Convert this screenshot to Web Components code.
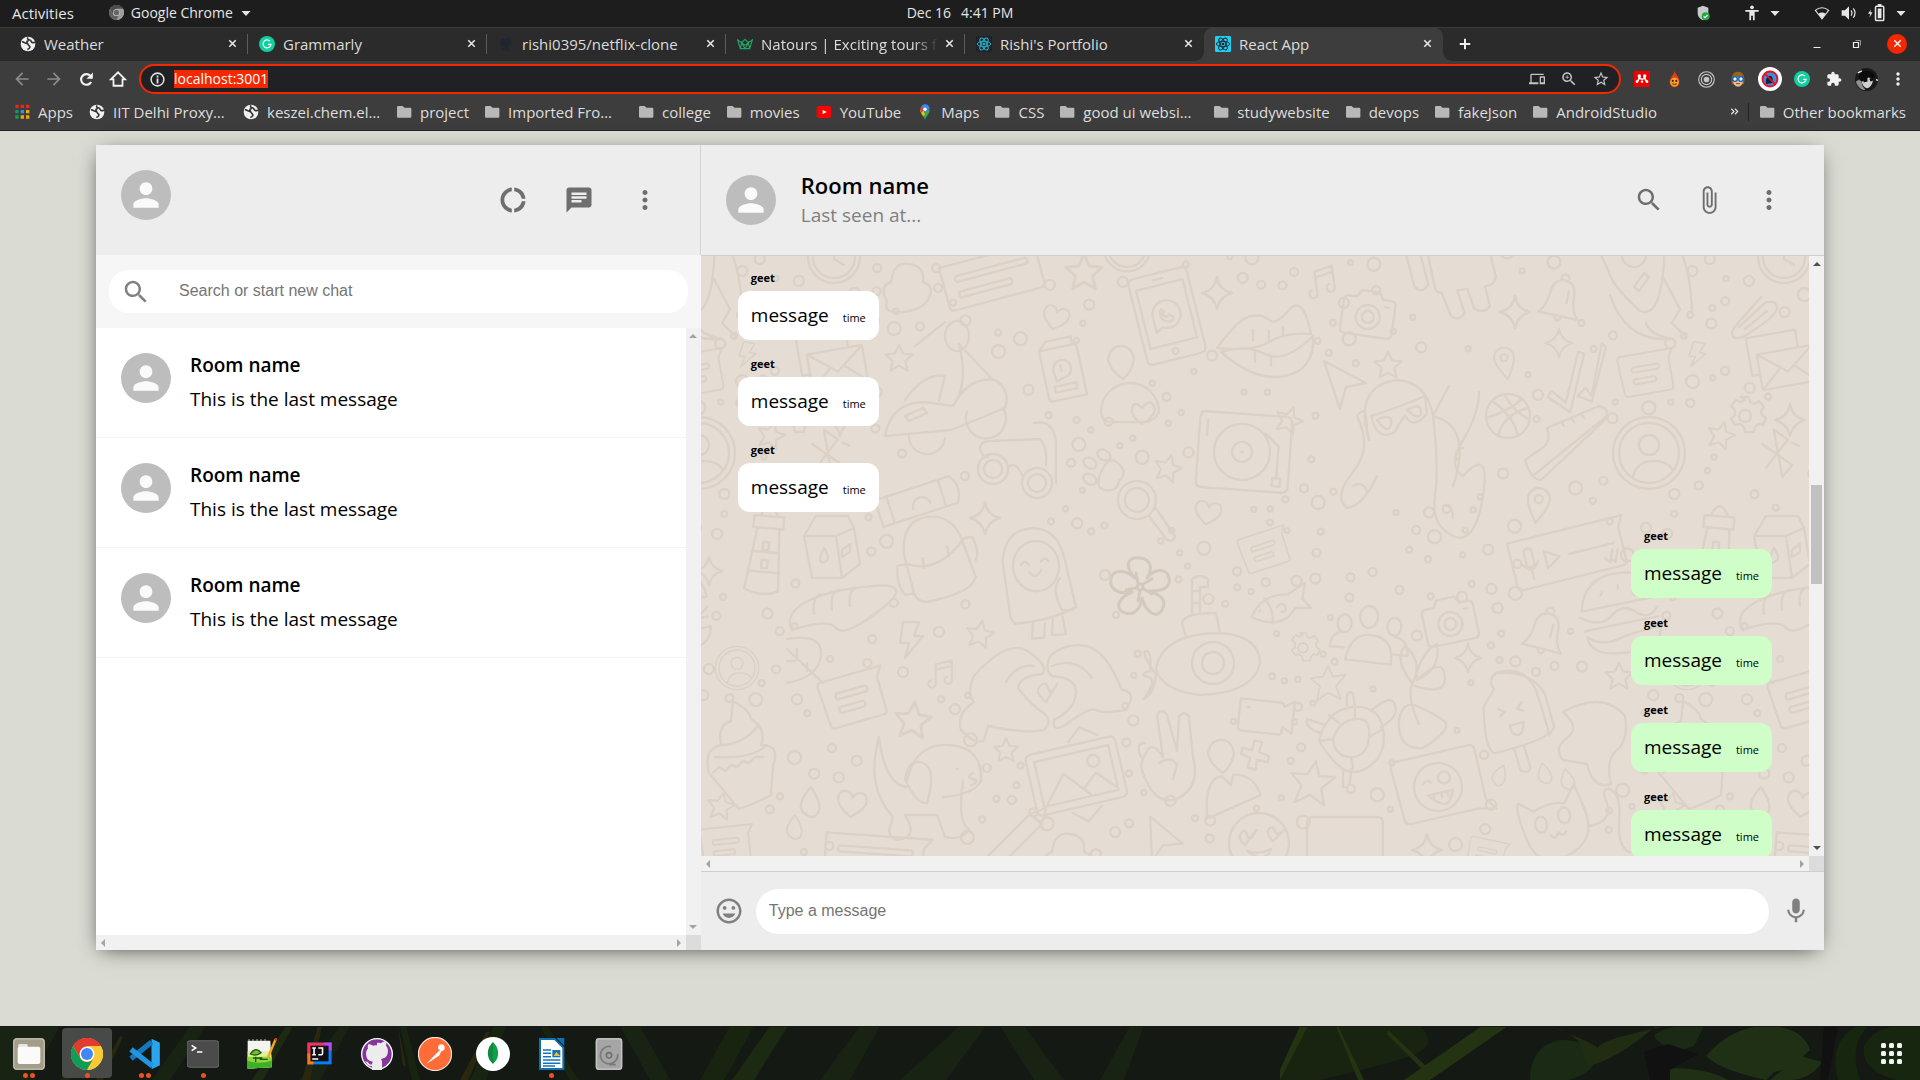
<!DOCTYPE html>
<html lang="en">
<head>
<meta charset="utf-8">
<title>React App</title>
<style>
html,body{margin:0;height:100%;background:#131710}
body{font-family:"Open Sans","Noto Sans",sans-serif;overflow:hidden}
</style>
</head>
<body>
<desktop-screen></desktop-screen>
<script>
const define = (name, html, setup) => {
  const tpl = document.createElement('template');
  tpl.innerHTML = html;
  customElements.define(name, class extends HTMLElement {
    connectedCallback() {
      if (this.shadowRoot) return;
      this.attachShadow({mode: 'open'}).append(tpl.content.cloneNode(true));
      if (setup) setup(this, this.shadowRoot);
    }
  });
};

/* ---------- icons ---------- */
const P = d => `<path fill="currentColor" d="${d}"/>`;
const ATOM = (bg, fg) => `<rect width="24" height="24" rx="2" fill="${bg}"/><g fill="none" stroke="${fg}" stroke-width="1.4"><ellipse cx="12" cy="12" rx="10" ry="4"/><ellipse cx="12" cy="12" rx="10" ry="4" transform="rotate(60 12 12)"/><ellipse cx="12" cy="12" rx="10" ry="4" transform="rotate(120 12 12)"/></g><circle cx="12" cy="12" r="2" fill="${fg}"/>`;
const MAG = 'M15.5 14h-.79l-.28-.27C15.41 12.59 16 11.11 16 9.5 16 5.91 13.09 3 9.5 3S3 5.91 3 9.5 5.91 16 9.5 16c1.61 0 3.09-.59 4.23-1.57l.27.28v.79l5 4.99L20.49 19l-4.99-5zm-6 0C7.01 14 5 11.99 5 9.5S7.01 5 9.5 5 14 7.01 14 9.5 11.99 14 9.5 14z';
const GRAM = '<circle cx="12" cy="12" r="12" fill="#12cf9f"/><path d="M16.5 7.8A6 6 0 1 0 18 12.6h-4.6M18 12.6l-1.6 3.6" fill="none" stroke="#fff" stroke-width="1.8"/>';
const OCTO = 'M12 2.5c1 0 2 .1 2.900.4 1.700-1.100 2.900-1.300 3.600-1.200.6 1.300.5 2.500.2 3.200 1 1 1.500 2.200 1.500 3.700 0 4.600-2.600 5.800-5.300 6.200.6.6.9 1.400.9 2.500V23H8.200v-3c-2.700.5-3.300-1-3.900-2-.4-.6-1-1-1.300-1.200 1.300-.6 2.300.3 3 1.300.6.9 1.500.8 2.200.5.1-.8.4-1.400.8-1.800-2.700-.4-5.200-1.600-5.200-6.200 0-1.500.5-2.700 1.500-3.700-.3-.7-.4-1.900.2-3.200.7-.1 1.900.1 3.600 1.200.9-.3 1.900-.4 2.900-.4z';
const ICONS = {
  donut: P('M11 5.08V2c-5 .5-9 4.81-9 10s4 9.500 9 10v-3.080c-3-.48-6-3.400-6-6.920s3-6.440 6-6.920zM18.970 11H22c-.47-5-4-8.530-9-9v3.080C16 5.510 18.540 8 18.970 11zM13 18.920V22c5-.47 8.530-4 9-9h-3.030c-.43 3-2.970 5.490-5.970 5.920z'),
  chat: P('M20 2H4c-1.100 0-1.990.9-1.990 2L2 22l4-4h14c1.100 0 2-.9 2-2V4c0-1.100-.9-2-2-2zM6 9h12v2H6V9zm8 5H6v-2h8v2zm4-6H6V6h12v2z'),
  more: P('M12 8c1.100 0 2-.9 2-2s-.9-2-2-2-2 .9-2 2 .9 2 2 2zm0 2c-1.100 0-2 .9-2 2s.9 2 2 2 2-.9 2-2-.9-2-2-2zm0 6c-1.100 0-2 .9-2 2s.9 2 2 2 2-.9 2-2-.9-2-2-2z'),
  person: P('M12 12c2.210 0 4-1.790 4-4s-1.790-4-4-4-4 1.790-4 4 1.790 4 4 4zm0 2c-2.670 0-8 1.340-8 4v2h16v-2c0-2.660-5.330-4-8-4z'),
  search: P(MAG),
  zoom: P(MAG + 'M12 10h-2v2H9v-2H7V9h2V7h1v2h2v1z'),
  clip: P('M16.500 6v11.500c0 2.210-1.790 4-4 4s-4-1.790-4-4V5c0-1.380 1.120-2.500 2.500-2.500s2.500 1.120 2.500 2.500v10.500c0 .55-.45 1-1 1s-1-.45-1-1V6H10v9.500c0 1.380 1.120 2.500 2.500 2.500s2.500-1.120 2.500-2.500V5c0-2.210-1.790-4-4-4S7 2.790 7 5v12.500c0 3.040 2.460 5.500 5.500 5.500s5.500-2.460 5.500-5.500V6h-1.500z'),
  smile: P('M11.990 2C6.470 2 2 6.480 2 12s4.470 10 9.990 10C17.520 22 22 17.520 22 12S17.520 2 11.990 2zM12 20c-4.420 0-8-3.580-8-8s3.580-8 8-8 8 3.580 8 8-3.580 8-8 8zm3.500-9c.83 0 1.500-.67 1.500-1.500S16.330 8 15.500 8 14 8.670 14 9.500s.67 1.500 1.500 1.500zm-7 0c.83 0 1.500-.67 1.500-1.500S9.330 8 8.500 8 7 8.670 7 9.500 7.670 11 8.500 11zm3.500 6.500c2.330 0 4.310-1.460 5.110-3.500H6.890c.8 2.040 2.780 3.500 5.110 3.500z'),
  mic: P('M12 14c1.660 0 2.990-1.340 2.990-3L15 5c0-1.660-1.340-3-3-3S9 3.340 9 5v6c0 1.660 1.340 3 3 3zm5.300-3c0 3-2.540 5.100-5.300 5.100S6.700 14 6.700 11H5c0 3.410 2.720 6.230 6 6.720V21h2v-3.280c3.280-.48 6-3.300 6-6.720h-1.700z'),
  back: P('M20 11H7.830l5.590-5.590L12 4l-8 8 8 8 1.410-1.410L7.830 13H20v-2z'),
  forward: P('M12 4l-1.410 1.410L16.170 11H4v2h12.170l-5.580 5.590L12 20l8-8z'),
  reload: '<path d="M18.500 15.500A7.500 7.500 0 1 1 17.300 6.700" fill="none" stroke="currentColor" stroke-width="3"/><path fill="currentColor" d="M21 2v9h-9z"/>',
  home: '<path d="M2.500 12.500L12 3l9.500 9.500H18V21H6v-8.500z" fill="none" stroke="currentColor" stroke-width="2.400"/>',
  info: '<circle cx="12" cy="12" r="9" fill="none" stroke="currentColor" stroke-width="2.200"/>' + P('M10.700 6.500h2.600V9h-2.600zM10.700 10.500h2.600v7h-2.600z'),
  cast: P('M4 6h18V4H4c-1.100 0-2 .9-2 2v11H0v3h14v-3H4V6zm19 2h-6c-.55 0-1 .45-1 1v10c0 .55.45 1 1 1h6c.55 0 1-.45 1-1V9c0-.55-.45-1-1-1zm-1 9h-4v-7h4v7z'),
  star: P('M22 9.240l-7.190-.62L12 2 9.190 8.630 2 9.240l5.460 4.730L5.820 21 12 17.270 18.180 21l-1.630-7.030L22 9.240zM12 15.400l-3.760 2.270 1-4.280-3.320-2.880 4.380-.38L12 6.100l1.710 4.040 4.380.38-3.320 2.880 1 4.280L12 15.400z'),
  puzzle: P('M20.500 11H19V7c0-1.100-.9-2-2-2h-4V3.500C13 2.120 11.880 1 10.500 1S8 2.120 8 3.500V5H4c-1.100 0-1.990.9-1.990 2v3.800H3.500c1.490 0 2.700 1.210 2.700 2.700s-1.210 2.700-2.700 2.700H2V20c0 1.100.9 2 2 2h3.800v-1.500c0-1.490 1.210-2.700 2.700-2.700 1.490 0 2.700 1.210 2.700 2.700V22H17c1.100 0 2-.9 2-2v-4h1.500c1.380 0 2.500-1.120 2.500-2.500S21.880 11 20.500 11z'),
  close: '<path d="M5 5l14 14M19 5L5 19" stroke="currentColor" stroke-width="3.400"/>',
  plus: '<path d="M12 3v18M3 12h18" stroke="currentColor" stroke-width="3.400"/>',
  min: '<path d="M5 19h14" stroke="currentColor" stroke-width="2"/>',
  restore: '<path d="M5 9h10v10H5z" fill="none" stroke="currentColor" stroke-width="2.400"/><path d="M9 5h10v10" fill="none" stroke="currentColor" stroke-width="1.500" opacity=".7"/>',
  tri: P('M3 8h18l-9 10z'),
  chevrons: '<path d="M5 6l6 6-6 6M13 6l6 6-6 6" fill="none" stroke="currentColor" stroke-width="2.600"/>',
  folder: P('M0 5q0-2 2-2h7l3 3h9q2 0 2 2v12q0 2-2 2H2q-2 0-2-2z'),
  globe: '<circle cx="12" cy="12" r="11" fill="#f1f1f1"/><path d="M3 9c3-1 4 2 7 2s2 3 4 4 0 5-3 5M12 2c-2 3 1 4 3 4s1 4 4 4 3-1 4 0M13 7c-3 0-4 3-1 4" fill="none" stroke="#333" stroke-width="2.400"/>',
  grammarly: GRAM,
  octo: `<g fill="#1f2630"><path d="${OCTO}"/></g>`,
  natours: '<path d="M1 6l6 4 5-5 5 5 6-4-4 13H5zM5 19l2-9 5 9 5-9 2 9M7 10l5 4 5-4" fill="none" stroke="#21a366" stroke-width="1.700"/>',
  atomdark: ATOM('#20232a', '#2fb5cf'),
  atomcyan: ATOM('#1fd0f5', '#20232a'),
  apps: '<g><path fill="#e8291c" d="M2 1h5v5H2zM10 1h5v5h-5zM18 1h5v5h-5z"/><path fill="#0c9d58" d="M2 9h5v5H2zM2 17h5v5H2z"/><path fill="#4285f4" d="M10 9h5v5h-5z"/><path fill="#f4a70b" d="M18 9h5v5h-5zM10 17h5v5h-5zM18 17h5v5h-5z"/></g>',
  youtube: '<rect x="1" y="3" width="22" height="18" rx="4" fill="#f00"/><path fill="#fff" d="M10 8.500l6 3.500-6 3.500z"/>',
  maps: '<path fill="#34a853" d="M12 24c-1-5-7-9-7-15h14c0 6-6 10-7 15z"/><path fill="#fbbc04" d="M5 9l4-2 3 9-3 2C7 15 5 12 5 9z"/><path fill="#ea4335" d="M5 9c0-3 1-5 2-6l5 4-5 6C6 12 5 10 5 9z"/><path fill="#4285f4" d="M7 3c3-4 11-4 12 4l-7 6z"/><circle cx="12" cy="8" r="2.600" fill="#fff"/>',
  shield: '<path fill="#c9c9c9" d="M12 1l8 3v8c0 6-4 9-8 11-4-2-8-5-8-11V4z"/><circle cx="16" cy="17" r="6" fill="#27a844"/><path d="M13 17l2 2 4-4" fill="none" stroke="#fff" stroke-width="1.600"/>',
  access: '<circle cx="12" cy="3.500" r="2.800" fill="currentColor"/>' + P('M2 7.500h20v2.500h-6v13h-2.600v-7h-2.800v7H8V10H2z'),
  wifi: '<path d="M2 8c6-5 14-5 20 0L12 21z" fill="none" stroke="currentColor" stroke-width="1.600"/>' + P('M6.500 13c3.500-2.500 7.500-2.500 11 0L12 21z'),
  volume: P('M1 8h5l6-6v20l-6-6H1z') + '<path d="M15 8q3 4 0 8M18.500 5q5 7 0 14" fill="none" stroke="currentColor" stroke-width="1.800"/>',
  battery: P('M4 7L0 13h3l-1 5 4-7H3z') + '<rect x="10" y="3" width="11" height="19" rx="1.500" fill="none" stroke="currentColor" stroke-width="2"/>' + P('M13 6h5v13h-5zM13 0h5v3h-5z'),
  mendeley: '<path fill="#f00000" d="M0 0h24v24H0z"/><circle cx="8" cy="7.500" r="2.600" fill="#fff"/><circle cx="16" cy="7.500" r="2.600" fill="#fff"/><circle cx="4.500" cy="16" r="2" fill="#fff"/><circle cx="12" cy="16" r="1.800" fill="#fff"/><circle cx="19.500" cy="16" r="2" fill="#fff"/><path d="M4.500 16q3-2 3.500-8 1 4 4 5 3-1 4-5 .5 6 3.500 8" fill="none" stroke="#fff" stroke-width="2.200"/>',
  flame: '<path fill="#e8391d" d="M12 0c1 4 7 8 7 15a7 8 0 0 1-14 0c0-5 6-9 7-15z"/><path fill="#f5a623" d="M12 9c4 0 6 4 6 7s-3 6-6 6-6-3-6-6 2-7 6-7z"/><circle cx="9.500" cy="14" r="1.500" fill="#40210d"/><circle cx="14.500" cy="14" r="1.500" fill="#40210d"/><path d="M9 18q3 2 6 0" fill="none" stroke="#40210d" stroke-width="1.400"/>',
  target: '<g fill="none" stroke="#c4c4c4" stroke-width="1.600"><circle cx="12" cy="12" r="11"/><circle cx="12" cy="12" r="7.300"/></g><circle cx="12" cy="12" r="4" fill="#c4c4c4"/>',
  girl: '<path fill="#9a6418" d="M3 20C1 8 4 1 12 1s11 7 9 19z"/><ellipse cx="12" cy="15" rx="7.500" ry="8.500" fill="#f2b98a"/><path fill="#9a6418" d="M4 9c2-6 14-6 16 0-6 1-10-1-16 0z"/><circle cx="7.500" cy="12" r="3.500" fill="#e8f4ff" stroke="#0b62c4" stroke-width="2"/><circle cx="16.500" cy="12" r="3.500" fill="#e8f4ff" stroke="#0b62c4" stroke-width="2"/><path d="M9 19h6" stroke="#b23b2a" stroke-width="1.500"/>',
  blocked: '<circle cx="12" cy="12" r="12" fill="#fff"/><circle cx="12" cy="12" r="7.500" fill="#3f8fd8"/><path d="M8 17q-1-6 3-8t4 7z" fill="#124"/><circle cx="12" cy="12" r="7.500" fill="none" stroke="#e8101a" stroke-width="1.800"/><path d="M6.700 6.700l10.600 10.600" stroke="#e8101a" stroke-width="1.800"/>',
  face: '<circle cx="12" cy="12" r="12" fill="#1a1a1a"/><path fill="#cfcfcf" d="M7 9c3-2 8-3 12 0 0 5-1 10-6 12-4 0-7-6-6-12z"/><path fill="#8f8f8f" d="M1 14l5-3 2 8 3 4C6 23 2 19 1 14z"/><path fill="#0b0b0b" d="M4 9C6 1 17 1 21 8l-2 3-5-1-6 4-3-1zM9 12l4-1v3l-4 1zM15 11l4-1v3l-3 1z"/><path d="M3 5l4-2M22 12l2 1" stroke="#eee" stroke-width="1.500"/>',
  grid: '<g fill="#f4f4f4">' + [2, 10, 18].map(y => [2, 10, 18].map(x => `<rect x="${x}" y="${y}" width="5" height="5" rx="1.500"/>`).join('')).join('') + '</g>',
  /* dock launchers */
  files: '<rect width="24" height="24" rx="3" fill="#a39d8c"/><rect x=".6" y=".6" width="22.800" height="22.800" rx="2.600" fill="none" stroke="#c2bcab" stroke-width="1"/><path fill="#e9e6df" d="M4 5.500q0-1 1-1h5q1 0 1 1V9H4z"/><rect x="3.500" y="6.500" width="17" height="13" rx="1.500" fill="#fafaf8"/>',
  chrome: '<circle cx="12" cy="12" r="12" fill="#fbc934"/><path fill="#e33b2e" d="M1.600 6A12 12 0 0 1 22.400 6H12a6 6 0 0 0-5.200 3z"/><path fill="#e33b2e" d="M1.600 6L6.800 15 12 6h10.400A12 12 0 0 0 1.600 6z"/><path fill="#0f9d58" d="M1.600 6A12 12 0 0 0 12 24l5.200-9a6 6 0 0 1-10.400 0z"/><path fill="#fbc934" d="M22.400 6A12 12 0 0 1 12 24l5.200-9A6 6 0 0 0 12 6z"/><circle cx="12" cy="12" r="5.600" fill="#fff"/><circle cx="12" cy="12" r="4.500" fill="#4285f4"/>',
  vscode: '<path fill="#1f86c9" d="M17 .8L23 3.500v17L17 23.200z"/><path fill="#2aa5ef" d="M17 .8L23 3.500v17L17 23.200V7z"/><path d="M1.500 15.500L17 3" stroke="#1577bd" stroke-width="4"/><path d="M1.500 8.500L17.500 21" stroke="#2196de" stroke-width="4"/>',
  terminal: '<rect y="2" width="24" height="20" rx="2.500" fill="#4b4b4b" stroke="#676767" stroke-width=".8"/><path d="M3.500 5.500l3 2-3 2M7.500 10.500h4" fill="none" stroke="#fff" stroke-width="1.200"/>',
  notepad: '<path fill="#f4f4ee" d="M2 2h17l1 20-18 1z"/><path fill="#dff0a0" d="M2 10h17.500l.5 6-18 1z"/><path fill="#8fd63a" d="M2 14h18v8L2 23z"/><path fill="#3fae2a" d="M2 17q9 3 18 0v5L2 23z"/><path d="M3 2v-1M6 2v-1M9 2v-1M12 2v-1M15 2v-1" stroke="#bbb" stroke-width="1"/><path d="M4 12q4-6 8-1-4 3-8 1zM6 15h7M8 14v4M11 16h6" fill="#6cbf2f" stroke="#20540f" stroke-width="1"/><path d="M23 1l-6 14" stroke="#f6a81c" stroke-width="1.800"/><path d="M23.600 0l-.8 2" stroke="#d33" stroke-width="1.800"/>',
  idea: '<path fill="#087cfa" d="M2 3h20v18H2z"/><path fill="#fe315d" d="M2 3h20l-9 9-11 3z"/><path fill="#b74af7" d="M16 3h6v7l-6-2z"/><path fill="#f97a12" d="M2 12h5v9H2z"/><path fill="#111" d="M4.500 5.500h15v13h-15z"/><path d="M6 16.500h5M6 7.500h3M6 13h3M7.500 7.500V13M11 7.500h3.500V12q0 1-1 1H11" fill="none" stroke="#fff" stroke-width="1.300"/>',
  github: `<circle cx="12" cy="12" r="11.500" fill="#87359b" stroke="#fff" stroke-width="1"/><g transform="translate(0 1)" fill="#ececec"><path d="${OCTO}"/></g>`,
  postman: '<circle cx="12" cy="12" r="11.700" fill="#ff6c37" stroke="#ffe9dc" stroke-width=".8"/><path d="M6 19l8-9 3-1-2 4z" fill="#fff"/><circle cx="16.500" cy="7.500" r="2.300" fill="#fff"/><path d="M8 16l7-7" stroke="#ff6c37" stroke-width=".8"/>',
  mongo: '<circle cx="12" cy="12" r="12" fill="#fff"/><path fill="#0ea04a" d="M12 3.500c3 3 4 6 3.500 9.500-.4 3-2 4.500-3.500 6z"/><path fill="#13883f" d="M12 3.500c-3 3-4 6-3.500 9.500.4 3 2 4.500 3.500 6z"/>',
  writer: '<path fill="#0f6fb0" d="M3 0h12l7 7v17H3z"/><path fill="#0f6fb0" d="M16 0h6v6z"/><path fill="#fff" d="M4.500 1.500h10l6 6v15h-16z"/><path d="M6 9h6M6 11.500h6M6 14h6M6 16.500h13M6 19h13M6 21h9" stroke="#1773b5" stroke-width="1.100"/><path fill="#1773b5" d="M13 9h6v5.500h-6z"/><path fill="#f2c037" d="M14 13.500l2-3 3 3z"/>',
  disk: '<rect x="2" width="20" height="24" rx="2.500" fill="#a5a5a5"/><rect x="2.600" y=".6" width="18.800" height="22.800" rx="2" fill="none" stroke="#c6c6c6"/><path d="M18.500 12a6.500 6.500 0 1 1-5-5.500M12 20h5" fill="none" stroke="#7a7a7a" stroke-width="1.200"/><circle cx="12" cy="13" r="2" fill="none" stroke="#707070" stroke-width="1.200"/>'
};
define('ui-icon', `<style>:host{display:block;flex:none}svg{display:block}</style>`, (host, root) => {
  const size = host.getAttribute('size') || 24;
  root.innerHTML += `<svg width="${size}" height="${size}" viewBox="0 0 24 24" aria-hidden="true">${ICONS[host.getAttribute('name')]}</svg>`;
});

define('icon-button', `<style>
:host{display:block;flex:none}
button{all:unset;display:flex;align-items:center;justify-content:center;box-sizing:border-box;width:var(--w,32px);height:var(--h,32px);border-radius:50%;cursor:pointer}
</style><button type="button"><ui-icon></ui-icon></button>`, (host, root) => {
  const icon = root.querySelector('ui-icon');
  const fresh = document.createElement('ui-icon');
  fresh.setAttribute('name', host.getAttribute('icon'));
  fresh.setAttribute('size', host.getAttribute('size') || 18);
  icon.replaceWith(fresh);
  root.querySelector('button').setAttribute('aria-label', host.getAttribute('label'));
});

/* ---------- system bar ---------- */
define('system-bar', `<style>
:host{display:grid;grid-template-columns:1fr auto 1fr;align-items:center;height:27px;background:#1d1d1d;color:#e6e6e6;font-size:15px;line-height:24px}
.l,.c,.r{display:flex;align-items:center;padding-bottom:2px}
.l{padding-left:12px}.app{display:flex;align-items:center;gap:7px;margin-left:35px;font-size:14px}
.c{gap:10px;font-size:14px}.r{justify-content:flex-end;padding-right:13px;gap:11px}
.ball{filter:grayscale(1);opacity:.75}
.g{margin-left:22px}
.t{margin-left:-2px}
</style>
<div class="l"><span>Activities</span><span class="app"><ui-icon class="ball" name="chrome" size="15"></ui-icon><span>Google Chrome</span><ui-icon name="tri" size="12"></ui-icon></span></div>
<div class="c"><span>Dec 16</span><span>4:41 PM</span></div>
<div class="r"><ui-icon name="shield" size="16"></ui-icon><ui-icon class="g" name="access" size="16"></ui-icon><ui-icon class="t" name="tri" size="12"></ui-icon><ui-icon class="g" name="wifi" size="16"></ui-icon><ui-icon name="volume" size="16"></ui-icon><ui-icon name="battery" size="18"></ui-icon><ui-icon class="t" name="tri" size="12"></ui-icon></div>`);

/* ---------- browser chrome ---------- */
define('browser-tab', `<style>
:host{display:flex;align-items:center;box-sizing:border-box;width:239px;height:33px;padding:0 10px 2px 11px;position:relative;color:#dcdcdc}
.title{all:unset;flex:1;min-width:0;overflow:hidden;white-space:nowrap;margin:0 5px 0 8px;font-size:15px;line-height:24px}
:host([fade]) .title{-webkit-mask:linear-gradient(90deg,#000 86%,transparent)}
:host(:not([active]):not([last]))::after{content:"";position:absolute;right:0;top:6px;width:1px;height:20px;background:#5c5c5c}
:host([active]){background:#3d3d3d;border-radius:8px 8px 0 0}
:host([active])::before,:host([active])::after{content:"";position:absolute;bottom:0;width:8px;height:8px}
:host([active])::before{left:-8px;background:radial-gradient(circle at 0 0,transparent 7px,#3d3d3d 8px)}
:host([active])::after{right:-8px;background:radial-gradient(circle at 100% 0,transparent 7px,#3d3d3d 8px)}
icon-button{--w:12px;--h:16px;color:#e8e8e8}
</style><slot name="icon"></slot><button class="title" type="button"><slot></slot></button><icon-button icon="close" size="11" label="Close tab"></icon-button>`);

define('tab-strip', `<style>
:host{display:flex;align-items:center;height:33px;border-top:1px solid #3c3c3c;background:#2b2b2b;padding:0 13px 0 9px}
.win{display:flex;align-items:center;margin-left:auto;gap:8px;color:#f0f0f0;padding-bottom:2px}
.new{margin-left:6px;color:#f0f0f0;padding-bottom:2px}
.x{--w:20px;--h:20px;background:#f42800;border-radius:50%;margin-left:6px}
</style>
<browser-tab><ui-icon slot="icon" name="globe" size="16"></ui-icon>Weather</browser-tab>
<browser-tab><ui-icon slot="icon" name="grammarly" size="16"></ui-icon>Grammarly</browser-tab>
<browser-tab><ui-icon slot="icon" name="octo" size="16"></ui-icon>rishi0395/netflix-clone</browser-tab>
<browser-tab fade><ui-icon slot="icon" name="natours" size="16"></ui-icon>Natours | Exciting tours for</browser-tab>
<browser-tab last><ui-icon slot="icon" name="atomdark" size="16"></ui-icon>Rishi's Portfolio</browser-tab>
<browser-tab active><ui-icon slot="icon" name="atomcyan" size="16"></ui-icon>React App</browser-tab>
<icon-button class="new" icon="plus" size="14" label="New tab"></icon-button>
<div class="win"><icon-button icon="min" size="12" label="Minimise"></icon-button><icon-button icon="restore" size="12" label="Restore"></icon-button><icon-button class="x" icon="close" size="11" label="Close"></icon-button></div>`);

define('address-bar', `<style>
:host{display:flex;align-items:center;box-sizing:border-box;flex:1;height:30px;margin:0 5px;padding:0 2px 0 8px;border:2px solid #f42800;border-radius:15px;background:#202124;color:#e0e0e0}
label{display:flex;align-items:center;flex:1;gap:8px}
input{all:unset;field-sizing:content;background:#f42800;color:#fff;font-size:14px;line-height:18px;height:18px}
icon-button{--h:24px;color:#c4c4c4}
</style><label><ui-icon name="info" size="17"></ui-icon><input value="localhost:3001" aria-label="Address"></label>
<icon-button icon="cast" size="16" label="Send to device"></icon-button><icon-button icon="zoom" size="18" label="Zoom"></icon-button><icon-button icon="star" size="18" label="Bookmark this page"></icon-button>`);

define('tool-row', `<style>
:host{display:flex;align-items:center;height:36px;padding:0 6px;background:#3d3d3d;color:#f2f2f2}
.off{color:#8b8b8b}
</style>
<icon-button class="off" icon="back" size="20" label="Back"></icon-button><icon-button class="off" icon="forward" size="20" label="Forward"></icon-button><icon-button icon="reload" size="17" label="Reload"></icon-button><icon-button icon="home" size="18" label="Home"></icon-button>
<address-bar></address-bar>
<icon-button icon="mendeley" size="16" label="Mendeley"></icon-button><icon-button icon="flame" size="17" label="Flame"></icon-button><icon-button icon="target" size="17" label="Target"></icon-button><icon-button icon="girl" size="16" label="Girl"></icon-button><icon-button icon="blocked" size="24" label="Blocker"></icon-button><icon-button icon="grammarly" size="16" label="Grammarly"></icon-button><icon-button icon="puzzle" size="16" label="Extensions"></icon-button><icon-button icon="face" size="23" label="Profile"></icon-button><icon-button icon="more" size="20" label="Menu"></icon-button>`);

define('bookmark-link', `<style>
:host{display:block;flex:none;box-sizing:border-box;padding-right:16px}
:host([long]){width:154px}
a{display:flex;align-items:center;gap:8px;color:#dedede;text-decoration:none;font-size:15px;line-height:22px;white-space:nowrap}
ui-icon{color:#b8b8b8}
</style><a href="#"><ui-icon></ui-icon><span><slot></slot></span></a>`, (host, root) => {
  const fresh = document.createElement('ui-icon');
  fresh.setAttribute('name', host.getAttribute('icon') || 'folder');
  fresh.setAttribute('size', host.hasAttribute('icon') ? 16 : 15);
  root.querySelector('ui-icon').replaceWith(fresh);
});
define('bookmark-row', `<style>
:host{display:flex;align-items:center;height:29px;padding:0 0 4px 14px;background:#3d3d3d;border-bottom:1px solid #242424;color:#e4e4e4}
.rest{display:flex;align-items:center;margin-left:auto}
.rest i{width:1px;height:18px;background:#222;margin:0 11px 0 8px}
.rest bookmark-link{padding-right:14px}
</style>
<bookmark-link icon="apps">Apps</bookmark-link><bookmark-link long icon="globe">IIT Delhi Proxy…</bookmark-link><bookmark-link long icon="globe">keszei.chem.el…</bookmark-link><bookmark-link>project</bookmark-link><bookmark-link long>Imported Fro…</bookmark-link><bookmark-link>college</bookmark-link><bookmark-link>movies</bookmark-link><bookmark-link icon="youtube">YouTube</bookmark-link><bookmark-link icon="maps">Maps</bookmark-link><bookmark-link>CSS</bookmark-link><bookmark-link long>good ui websi…</bookmark-link><bookmark-link>studywebsite</bookmark-link><bookmark-link>devops</bookmark-link><bookmark-link>fakeJson</bookmark-link><bookmark-link>AndroidStudio</bookmark-link>
<div class="rest"><ui-icon name="chevrons" size="11"></ui-icon><i></i><bookmark-link>Other bookmarks</bookmark-link></div>`);

/* ---------- chat pieces ---------- */
define('user-avatar', `<style>
:host{display:flex;flex:none;align-items:center;justify-content:center;width:50px;height:50px;border-radius:50%;background:#bdbdbd;color:#fafafa}
</style><ui-icon name="person" size="38"></ui-icon>`);

define('scroll-track', `<style>
:host{display:flex;justify-content:space-between;align-items:center;background:#f1f1f1;color:#a3a3a3}
:host([axis=y]){flex-direction:column;width:15px}
:host([axis=x]){height:15px}
:host([strong]){color:#505050}
i{width:0;height:0;border:4px solid transparent}
:host([axis=y]) .a{border-top:0;border-bottom-color:currentColor;margin-top:6px}
:host([axis=y]) .b{border-bottom:0;border-top-color:currentColor;margin-bottom:6px}
:host([axis=x]) .a{border-left:0;border-right-color:currentColor;margin-left:5px}
:host([axis=x]) .b{border-right:0;border-left-color:currentColor;margin-right:5px}
.thumb{display:none;width:11px;height:99px;background:#c1c1c1;margin-bottom:43px}
:host([strong]) .thumb{display:block}
</style><i class="a"></i><span class="thumb"></span><i class="b"></i>`);

define('room-row', `<style>
:host{display:flex;box-sizing:border-box;height:110px;padding:25px 25px 0;border-bottom:1px solid #f4f4f4;gap:19px}
h2{margin:0 0 10px;font-size:19px;line-height:24px;font-weight:600}
p{margin:0;font-size:19px;line-height:24px}
</style><user-avatar></user-avatar><div><h2><slot></slot></h2><p><slot name="last"></slot></p></div>`);

define('room-sidebar', `<style>
:host{display:flex;flex-direction:column;flex:35;min-width:0;background:#fff}
header{display:flex;box-sizing:border-box;height:110px;padding:25px 28px 25px 25px;background:#ededed;border-right:1px solid #d3d3d3}
nav{display:flex;align-self:center;margin-left:auto;gap:12px;color:#6e6e6e;--w:54px;--h:54px}
.find{background:#f6f6f6;padding:15px 13px}
label{display:flex;align-items:center;height:43px;border-radius:20px;background:#fff;padding:0 12px;gap:28px;color:#808080}
input{all:unset;flex:1;font-family:"Liberation Sans",Arial,sans-serif;font-size:16px;line-height:20px;padding-bottom:2px;color:#222}
input::placeholder{color:#757575;opacity:1}
.list{flex:1;display:grid;grid-template:1fr 15px / 1fr 15px;min-height:0}
.corner{background:#dcdcdc}
</style>
<header><user-avatar></user-avatar><nav><icon-button icon="donut" size="30" label="Status"></icon-button><icon-button icon="chat" size="30" label="New chat"></icon-button><icon-button icon="more" size="30" label="Menu"></icon-button></nav></header>
<div class="find"><label><ui-icon name="search" size="30"></ui-icon><input placeholder="Search or start new chat" aria-label="Search or start new chat"></label></div>
<div class="list"><div>
<room-row>Room name<span slot="last">This is the last message</span></room-row>
<room-row>Room name<span slot="last">This is the last message</span></room-row>
<room-row>Room name<span slot="last">This is the last message</span></room-row>
</div><scroll-track axis="y"></scroll-track><scroll-track axis="x"></scroll-track><div class="corner"></div></div>`);

define('chat-message', `<style>
:host{display:flex;flex-direction:column;align-self:flex-start;margin-bottom:16px;flex:none}
:host([own]){align-self:flex-end;margin-bottom:17px}
b{font-size:11px;line-height:16px;padding-left:13px;margin-bottom:5px}
p{display:flex;align-items:baseline;gap:14px;margin:0;padding:10px 13px;border-radius:12px;background:#fff;font-size:19px;line-height:29px}
:host([own]) p{background:#d0fec8}
time{font-size:11px;line-height:11px}
</style><b>geet</b><p><slot></slot><time>time</time></p>`);

/* Line doodles for the wallpaper, each drawn round its own origin. */
const SH = {
  star: 'M0-15L4.500-5 15-4 7 3.500 9.500 14 0 8.500-9.500 14-7 3.500-15-4-4.500-5z',
  spark: 'M0-16Q2-3 15 0 3 3 0 16-3 3-15 0-2-3 0-16z',
  heart: 'M0 14C-10 7-16 1-14-6S-3-13 0-5C3-13 12-13 14-6S10 7 0 14z',
  bolt: 'M-8-18H8L3-4H12L-6 18-2 3H-11z',
  note: 'M-32-20q0-4 4-4H34L28-14V20q0 4-4 4H-26q-4 0-4-4zM-16-9H14q3 3 0 6H-16q-3-3 0-6zM-16 5H8q3 3 0 6H-16q-3-3 0-6z',
  card: 'M-52-22H54L46-12V18q0 5-5 5H-47q-5 0-5-5zM-38-10H34q3 3 0 6H-38q-3-3 0-6zM-38 6H14q3 3 0 6H-38q-3-3 0-6z',
  voice: 'M-58-24H60L54-14V20q0 5-5 5H-53q-5 0-5-5zM-44-12q4-5 8 0v14q-4 5-8 0zM-48 0q8 14 16 0M-40 8v9M-24-8V10L-10 1zM0 1H46M34 14l4 5 5-12M40 16l3 4 5-12',
  phone: 'M-24-44H24q6 0 6 6V38q0 6-6 6H-24q-6 0-6-6V-38q0-6 6-6zM-24-32H24V28H-24zM-5-38H5M-3 36a3 3 0 1 0 6 0 3 3 0 1 0-6 0M-14 14V-2A14 14 0 1 1 2 12q-6 0-9-2zM-6-6q-2 12 10 12l2-4-4-3-3 2-3-4 2-2-2-3z',
  lips: 'M-48 8Q-26-22-14-24T4-20 24-30 46-6Q20-8 4 2T-48 8zM-44 12Q-20 4 0 14T48-4Q50 30 20 36T-44 12zM-12 0v-10M4 0v-9M18-4v-9M-10 12v10M6 16v9',
  cam: 'M-26-12q0-5 5-5h8l4-7H9l4 7h8q5 0 5 5V16q0 5-5 5H-21q-5 0-5-5zM-12 2a12 12 0 1 0 24 0 12 12 0 1 0-24 0M-6 2a6 6 0 1 0 12 0 6 6 0 1 0-12 0M16-10h4',
  bell: 'M-20 16Q-12 8-12-8 -10-20 0-20T12-8Q12 8 20 16zM-4 16q4 10 8 0M-4-22a4 4 0 1 1 8 0M6-10v12',
  env: 'M-26-10H30V26H-26zM-26-10L2 12 30-10M-26 26L-6 8M30 26L10 8M-26 10H-34V-28H16V-10',
  pin: 'M0 18Q-11 2-11-6A11 11 0 1 1 11-6Q11 2 0 18zM-4-6a4 4 0 1 0 8 0 4 4 0 1 0-8 0',
  music: 'M-6 10V-12L12-16V6M-6-6L12-10M-6 10a4 4 0 1 1-5-4M12 6a4 4 0 1 1-5-4',
  arrow: 'M-18-24L24-2 4 2-2 24z',
  cursor: 'M-12-26L24 4 2 6-10 24z',
  gear: 'M-4-18h8l1 5 4 2 5-3 5 6-3 4 1 4 4 3-3 7-5-1-3 3-1 5h-9l-1-5-4-3-5 1-4-6 4-4V-5l-4-4 5-6 5 2 4-2zM-6 1a6 6 0 1 0 12 0 6 6 0 1 0-12 0',
  ring: 'M-26 0a26 26 0 1 0 52 0 26 26 0 1 0-52 0M-21 0a21 21 0 1 0 42 0 21 21 0 1 0-42 0M0-14V2L10 8',
  user: 'M-36 0a36 36 0 1 0 72 0 36 36 0 1 0-72 0M-30 0a30 30 0 1 0 60 0 30 30 0 1 0-60 0M-10-8a10 10 0 1 0 20 0 10 10 0 1 0-20 0M-16 24Q-12 8 4 8T24 18',
  ball: 'M-22 0a22 22 0 1 0 44 0 22 22 0 1 0-44 0M-16-15Q6 0 10 20M-22 2Q0-4 14-17M-10 20Q-4-2 20-8M-4-22Q4-6 22 4',
  cloud: 'M-20 14q-8-16 4-20 2-20 18-18t14 18q12 4 6 16T-4 24-20 14z',
  deck: 'M-44-38H40q6 0 6 6V32q0 6-6 6H-40q-6 0-6-6V-32zM-30 0a28 28 0 1 0 56 0 28 28 0 1 0-56 0M-12 0a10 10 0 1 0 20 0 10 10 0 1 0-20 0M-3 0h2M20-20L34-8V24M30 24h8v8h-8zM-38-30v16',
  glass: 'M-40-14q0-8 10-8l50-2q8 10 6 26M-40-14q2 8 8 8M-42 6a15 15 0 1 0 30 0 15 15 0 1 0-30 0M-36 6a9 9 0 1 0 18 0 9 9 0 1 0-18 0M2 20a15 15 0 1 0 30 0 15 15 0 1 0-30 0M8 20a9 9 0 1 0 18 0 9 9 0 1 0-18 0M-12 4q8-6 14 8M14-40q20-4 22 20V20',
  paw: 'M-14 10Q-20-2 0-4T14 10Q10 20 0 16-10 20-14 10zM-18-10a5 7 0 1 0 10 0 5 7 0 1 0-10 0M-4-18a5 7 0 1 0 10 0 5 7 0 1 0-10 0M10-10a5 7 0 1 0 10 0 5 7 0 1 0-10 0',
  mag: 'M-19 0a19 19 0 1 0 38 0 19 19 0 1 0-38 0M-12 0a12 12 0 1 0 24 0 12 12 0 1 0-24 0M10 16L26 42q5 4 9-2L18 10',
  tube: 'M-44-14H34q10 14 0 28H-44zM-32-14V14M22-14V14M-10 6a9 9 0 1 1 18 0',
  book: 'M-18-26H16q4 0 4 4V26H-14q-4 0-4-4zM-18-26l8-8H16v8M-10 12H12v6H-10zM-8-4a9 9 0 1 1 9 9l-8 2zM0-8v6',
  drop: 'M0-16Q12 2 7 10T-7 10 0-16z',
  scoot: 'M-60 30Q-54-4-20-4L8 0Q24-30 50-26 66-16 60 2L6 24-60 30zM-36 28a18 18 0 0 0 36 4M22 6a20 20 0 1 0 36-4M8 0Q24-20 14-62M14-62L48-26M-30-60L0-84M0-70a12 15 0 1 0 24 0 12 15 0 1 0-24 0M-40 10l18-8 4 5-18 8zM-40-6Q-20-34 0-30L-6-6',
  helm: 'M-29 8A29 29 0 1 1 29 8Q24 18 14 18H-20q-8 0-9-10zM12 20Q0 12 2 4T12 4Q20-6 24 2T12 20z',
  milk: 'M-26-14L-18 28H12L30 14 24-22 6-14H-26L-14-34H18L24-22M6-14L12 28M-6-2Q2 10-6 12T-6-2zM12 0l8-6v8l-8 5z',
  bread: 'M-44 20Q-52 4-30-8T36-24 44 0 0 18-44 20zM-22 4Q-24-12-16-16M-4 0Q-6-16 2-20M14-4Q12-20 20-22',
  pack: 'M-32-10Q-30-44-4-44T28-14L36 22Q30 38-16 40 -28 38-28 24zM-30 0Q0 14 30-18M-32 0h-8q-4 22 4 30h8M30-18h8q6 16 0 24M-14-4v10M12-12v10',
  hood: 'M-30 36L-34-20Q-30-52-4-52T28-20L36 30Q8 42-26 42zM-24-14a22 24 0 1 0 46 0 22 24 0 1 0-46 0M-16-16q4-6 8 0M4-18q4-6 8 0M-8-8q6 8 12-2M-8 42l-2 16h12l2-14M12 40l-2 16h14l-2-18M22 0q-10 10 0 32h10',
  flower: 'M-5-9C-18-24-10-30 0-29S14-20 7-9C16-20 27-18 29-9S24 4 9 4C22 8 27 14 22 23S6 26 2 11C0 24-8 30-17 25S-20 10-8 5C-22 8-31 2-29-8S-16-18-5-9zM-3 0a3 3 0 1 0 6 0 3 3 0 1 0-6 0M-2-4L-4-14M3-3L12-8M4 2L12 7M0 4L-2 14M-4 1L-14 3',
  sub: 'M-52 6Q-46-30 14-30 52-26 52 0 46 30-8 32-46 28-52 6zM-22-26l-4-14q2-10 34-10l4 20M-16-50v-34q8-6 16 0v8h-8v26M-16-60h8M-16-72h8M-16 0a20 20 0 1 0 42 0 20 20 0 1 0-42 0M-6 0a11 11 0 1 0 22 0 11 11 0 1 0-22 0M-52 12q-16-24-10-24t4 20q-12 4-2 6t-4 22q10-6 12-24',
  fish: 'M-28 8Q-18-14 10-12L28-22 24-6 32 4 16 2Q2 24-28 8zM-14-10Q-4 4-8 16M-20 2h1M-2 0q6-6 8 0t-4 5',
  hands: 'M-85 40Q-70 56-62 50L-58 36Q-20 44-2 40 8 30-4 22T-28-2Q-26-14-4-16 4-24-20-40-40-50-72-14 -80 4-72 12 -90 24-85 40zM80 20Q92 2 76 0 60-40 40-44T4-34Q-2-20 6-14 32-12 30 4T8 30Q6 42 18 36 44 16 50 20T80 20zM-40-8Q-30-26-12-24M6-24Q30-34 46-12M0 12Q-12 2-6-4T2-2 10-4 0 12z',
  dog: 'M-50-50Q-64 0-36 30L-40 44Q-36 58-22 50-14 44-24 28L8 28 16 50Q34 54 40 42 28 36 34-6M-50-50Q-44 0-20 0M-22-6Q-14-44 20-42T52-6Q44 8 14 10M-24-8Q-20-30-6-24T-2 16Q-12 18-24-8M28-18h1M44-14q-8 4 0 6t-2 6M30-2',
  pic: 'M-40-30H40q6 0 6 6V26q0 6-6 6H-40q-6 0-6-6V-24q0-6 6-6zM-38-22H38V24H-38zM-34 22L-12-4 10 22M6 14L20 2 36 20M14-10a6 6 0 1 0 12 0 6 6 0 1 0-12 0M0-34l14-12 16 12M-12 36l14 12 16-12',
  peace: 'M-26 10Q-14 50 10 42 34 30 26 0L22-40q-5-8-10 0L10-6 0-42q-6-8-10 0L-4 0Q-14-16-20-6T-26 10zM-8 6q12-8 18 2l-4 14M-26 0q-6-14 4-14',
  balloon: 'M-13-3Q-11-17 0-17T13-3Q10 10 2 16 -10 8-13-3z',
  hat: 'M-28 22Q-26-18-8-18L0-8 4-18Q24-16 28 6z',
  cross: 'M-4-14H4L3-4 14-2V4L3 4 4 14H-4V4L-14 2V-4L-4-4z',
  vid: 'M-26-16H14q4 0 4 4L28-18V14L18 8v4q0 4-4 4H-22q-4 0-4-4zM-18-8h2',
  sea: 'M0-22L6-8 22-10 10 4 16 20 0 12-14 22-10 4-22-6-6-8z',
  love: 'M-30 0a30 30 0 1 0 60 0 30 30 0 1 0-60 0M-14 2Q-22-4-18-10T-12-8 -4-10-14 2zM14-2Q6-10 10-14T16-12 24-12 14-2zM-12 8Q0 12 12 6 6 22-12 8z',
  pencil: 'M-34 26L18-26 34-32 30-16-22 36zM18-26L30-16M-28 20L-16 30',
  robot: 'M-30-40H26q4 0 5 4L36 16q-2 8-12 8L26 44q-8 8-16 0L6 24H-4L0 48q-8 8-14 0L-20 24q-6 0-6-8zM-52-38q8-10 14 0L-32 14q-8 10-14 0zM40-50q8-6 12 0L58-6q-6 10-14 2z',
  rocket: 'M-42-40Q-30-20-26-8T4 28Q24 36 28-20T-20-60M-14-28a12 12 0 1 0 24 0 12 12 0 1 0-24 0M-2 4l10-14 5 4-10 14zM-26 12Q-10 60 36 56 14 52 10 40M28-4l16 30-8 14 14 14M40-40Q54-20 56 28',
  clip: 'M-18 14L8-10q10-4 12 4T-14 24q-14 4-10-8L4-16M-12 16L10-2',
  squid: 'M-26 40Q-40 70-56 72-70 60-50 36T-46-20Q-36-34-36-6L-34 4Q-50-50-6-56 24-54 30-20L46-50M30-20Q70-10 50 50M30-20Q36 30 32 60T50 100 80 60 60 40Q44 30 60 4T76-44M-32-20Q0-30 22-40L24-22Q10-6 2-20-6-10-8-4-26 6-32-20zM-26-16q16-8 14 4t-14-4zM4-26q14-8 14 2t-14-2zM-50 50q10-6 14 6M40 70q10-2 10 12M60 12q-10 2-6 12',
  shoe: 'M-40 14L-20 0Q-14-8-18-18L34-40q10 2 8 12L-24 34q-10 0-16-20zM-30 28L42-30M-4-24l3 4M6-28l3 4M16-32l3 4',
  lamp: 'M-18 34L-10-28H12L16 34Q0 42-18 34zM-14-40H16V-28H-14zM-8-40Q0-60 10-40M-14-4H14M-16 16H16M-3-14h6v8h-6zM-3 4h6v8h-6z',
  burger: 'M-38-8Q-34-42 0-44T38-18zM-40-2Q-20 10-8-2T16-4 38-8M-36 12Q-10 8 38 2M-34 18q14 10 30 4T40 12Q40 34 4 36T-34 18zM-16-26l-2 3M0-32v4M14-24l2 3',
  people: 'M-22 28Q-18 0 4 2T24 30zM-10-16a9 11 0 1 0 18 0 9 11 0 1 0-18 0M-32-8a7 9 0 1 0 14 0 7 9 0 1 0-14 0M18-8a7 9 0 1 0 14 0 7 9 0 1 0-14 0M-24 16H-38q0-14 12-16M26 20h14q0-16-14-18',
  plant: 'M0 48Q-26 50-24 20-20 0-6 6T20 20 0 48zM-4 24Q-20-10-6-24M-10-16Q-30-40-18-54 -2-40-8-22 0-50 14-56 18-30-6-20 20-44 22-24T-8-14',
  turtle: 'M-32 8Q-24-24 2-26T32-4 20 32-8 36-32 8zM-18 6Q-12-12 4-14T18 4 0 24-18 6zM-18 6L-32 8M4-14V-26M18 4L32-4M0 24L2 36M-12-10l-10-8M20-22Q40-40 44-28T30-6M-26-8L-44-14q-2 10 14 14M-8 36v18q8 4 8-18M4-26l-2-14q-8-4-6 12',
  ice: 'M-30-14Q-22-24-18-30 -24-40-14-46 20-52 26-14L32 18Q30 26-24 34-34 30-30-14zM-14-46Q22-44 32-20L38 14 32 22M-4 32l4 22q8 4 10-2L6 30M-16-10l6 4-5 4M8-14l-5 6 6 3M-6 8l14-2q-2 14-8 12t-6-10z',
  blob: 'M-30-28Q10-50 32-24 36 0 24 10T18 44Q0 50-6 24L-30 20Q-40 8-26-2T-30-28z',
  wink: 'M-42-28q0-6 6-6H38q6 0 6 6V22l8 12L34 30H-34q-6 0-6-6zM-24 0a24 24 0 1 0 48 0 24 24 0 1 0-48 0M-14-6q5-5 8 0M2-8a6 6 0 1 0 12 0 6 6 0 1 0-12 0M-12 6H14Q8 20 2 18T-12 6zM-6 6v5M2 6v5M8 6v5',
  cat: 'M-32-24L-18-14Q0-22 14-18L26-36 34-6Q40 24 10 34T-28 14-32-24zM-18 0a6 8 0 1 0 12 0 6 8 0 1 0-12 0M6-6a6 8 0 1 0 12 0 6 8 0 1 0-12 0M-4 12q4 6 8-2 4 6 8 0M34 8Q60 8 56-14 52-28 60-26 72-20 66 6T72 40',
  hicard: 'M-34-30H30q6 0 6 6V34H-40V-24q0-6 6-6z',
  cake: 'M-34 20Q-40-4-22-8 -26-28-12-32L-10-52Q6-44 8-34 24-24 18-8 38-8 30 12L28 42Q14 50-4 56L-34 20zM-22-8Q0-8 16-28M-28 4Q10 6 24-8M-30 20l6-6 6 4 6-6 6 2 6-6 6 2 6-6 8 0',
  tick: 'M-30 18L-26 12-12 24 2-26 8-24-8 34zM0 18l8-8 6 8L26-34 30-30 14 24z',
  leaf: 'M-18-24Q18-30 16-8T-18 20M-18-14L18 20M-8-4v-10M-10-2h-8M2 8v-8',
  bt: 'M-16-12L10 14-2 24V-24L10-12-16 12M14-8l6 4'
};
const DOODLES = [['ring',47,1],['cloud',120,32],['card',208,20,1,-15],['star',297,16,1.2],['ring',340,-8,.9],['phone',380,60,1,-14],['spark',430,37],['lips',478,84],['heart',269,61,.9,15],['star',112,102,.9],['scoot',158,150],['book',275,117,1,-12],['balloon',334,107],['helm',343,148],['deck',457,196,1,4],['star',502,164,.9,20],['bt',43,197,1,-10],['glass',233,207],['paw',318,217,1,-60],['mag',350,244,1,-5],['star',381,212,.9,15],['spark',198,262],['heart',421,256,.9,10],['tube',134,244,1,-18],['env',47,104,1,-10],['gear',8,159],['milk',43,294],['bread',49,354],['pack',150,304,1,-8],['hood',251,324,1,-4],['flower',353,331],['sub',421,407],['fish',492,351,1,-5],['note',478,294,.75,-18],['gear',516,391,.8],['bolt',124,384],['star',193,378,.9,10],['leaf',18,407],['note',67,442,1,-16],['music',154,419,.9],['hands',259,434],['star',126,464,1.200,6],['dog',142,531],['star',219,494,.8],['pic',289,519,1,-13],['peace',380,501],['balloon',434,501],['hat',445,537,1,-8],['cross',468,499,1,14],['vid',478,461,1,6],['sea',525,527,1,10],['love',472,587],['pencil',225,584],['cloud',281,602],['cursor',374,584,.9],['drop',24,547],['drop',8,572,.8],['heart',65,547,1,8],['card',90,602,1,4],
['music',535,27,1,-8],['cam',581,59,1,8],['robot',671,10,1,-8],['spark',728,56],['bell',774,44,1,12],['rocket',849,27],['clip',20,57],['arrow',555,129],['star',601,109,.9],['pin',718,107,.9,-10],['spark',772,87,.9],['tick',790,122,1,-2],['note',860,117,.85,-10],['bolt',910,99,.7,10],['squid',616,180],['ball',721,160],['shoe',778,190],['user',862,197],['star',934,179,.9,15],['spark',53,164],['pin',751,249,1,8],['voice',782,297,1,-14],['lamp',928,300,1,5],['cam',663,366,1,-12],['bell',758,377,1,14],['burger',833,361,1,-4],['people',582,377,1,4],['plant',636,444],['spark',681,402,.9],['sea',541,427,.8],['turtle',564,477],['ice',728,461,1,-6],['blob',806,484],['wink',651,531,1,-13],['cat',766,567,1,-8],['hicard',560,591],['cake',906,497],['user',900,412,.6],['star',884,550,.9,10],['drop',713,520,.7,20],['drop',758,518,.7,-15],['drop',781,524,.7,-15],['spark',640,594],['note',890,590,.8,-6],['star',832,420,.9],['spark',872,315,.9],['note',700,598,.6,12]];
function wallpaper() {
  let out = '';
  for (const [n, x, y, s = 1, r = 0] of DOODLES) {
    const dx = x < 60 ? [0, 950] : x > 890 ? [0, -950] : [0];
    for (const d of dx) out += `<path ${n === 'flower' ? 'stroke="#d3c9bd" stroke-width="3"' : ''} d="${SH[n]}" transform="translate(${x + d} ${y}) rotate(${r}) scale(${s})"/>`;
  }
  const big = {scoot:60,hands:74,squid:72,sub:58,dog:55,phone:46,lips:46,card:44,voice:48,deck:50,hood:50,pack:46,pic:46,rocket:52,robot:52,wink:46,cat:44,user:38,glass:42,milk:34,bread:36,turtle:42,plant:42,ice:44,blob:40,burger:42,cake:44,env:34,love:32,shoe:36,peace:36,tube:38,mag:30,people:36,hicard:42,lamp:36,tick:30,note:32,flower:32};
  let seed = 7; const rnd = () => (seed = seed * 16807 % 2147483647) / 2147483647;
  const dots = [];
  for (let i = 0; i < 5000 && dots.length < 270; i++) {
    const x = rnd() * 938 + 6, y = rnd() * 600, r = [2.500, 3, 4, 5, 6.500][rnd() * 5 | 0];
    if (DOODLES.some(([n, a, b, s = 1]) => Math.hypot(a - x, b - y) < (big[n] || 22) * s + r)) continue;
    if (dots.some(([a, b, c]) => Math.hypot(a - x, b - y) < c + r + 7)) continue;
    dots.push([x, y, r]);
  }
  return out + dots.map(([x, y, r]) => `<circle cx="${x.toFixed(1)}" cy="${y.toFixed(1)}" r="${r}"/>`).join('');
}
define('chat-wallpaper', `<style>:host{display:block;background:#e5ddd3;overflow:hidden}svg{display:block;width:100%;height:100%}</style>`, (host, root) => {
  root.innerHTML += `<svg aria-hidden="true"><defs><pattern id="p" x="86" y="0" width="950" height="640" patternUnits="userSpaceOnUse"><g fill="none" stroke="#dbd1c6" stroke-width="2.400" stroke-linejoin="round" stroke-linecap="round">${wallpaper()}</g></pattern></defs><rect width="100%" height="100%" fill="url(#p)"/></svg>`;
});

define('chat-panel', `<style>
:host{display:flex;flex-direction:column;flex:65;min-width:0;background:#ededed}
header{display:flex;align-items:center;box-sizing:border-box;height:111px;padding:0 28px 0 25px;border-bottom:1px solid #cfcfcf}
.who{margin-left:25px}
h1{margin:0;font-size:22px;line-height:30px;font-weight:600}
.who p{margin:0;font-size:19px;line-height:30px;color:#808080}
nav{display:flex;margin-left:auto;gap:6px;color:#6e6e6e;--w:54px;--h:54px}
.body{flex:1;min-height:0;display:grid;grid-template:minmax(0,1fr) 15px / 1fr 15px}
chat-wallpaper,.msgs{grid-area:1/1}
.msgs{display:flex;flex-direction:column;min-height:0;overflow:hidden;padding:14px 37px 0;z-index:1}
.v{grid-area:1/2}.h{grid-area:2/1}.corner{grid-area:2/2;background:#dcdcdc}
footer{display:flex;align-items:center;box-sizing:border-box;height:79px;padding:0 1px;border-top:1px solid #cfcfcf;color:#808080;--w:54px;--h:54px}
input{all:unset;box-sizing:border-box;flex:1;height:45px;border-radius:23px;background:#fff;padding:0 13px;font-family:"Liberation Sans",Arial,sans-serif;font-size:16px;color:#222}
input::placeholder{color:#757575;opacity:1}
</style>
<header><user-avatar></user-avatar><div class="who"><h1>Room name</h1><p>Last seen at...</p></div><nav><icon-button icon="search" size="30" label="Search"></icon-button><icon-button icon="clip" size="30" label="Attach"></icon-button><icon-button icon="more" size="30" label="Menu"></icon-button></nav></header>
<div class="body"><chat-wallpaper></chat-wallpaper><div class="msgs">
<chat-message>message</chat-message><chat-message>message</chat-message><chat-message>message</chat-message><chat-message own>message</chat-message><chat-message own>message</chat-message><chat-message own>message</chat-message><chat-message own>message</chat-message>
</div><scroll-track class="v" axis="y" strong></scroll-track><scroll-track class="h" axis="x"></scroll-track><div class="corner"></div></div>
<footer><icon-button icon="smile" size="30" label="Emoji"></icon-button><input placeholder="Type a message" aria-label="Type a message"><icon-button icon="mic" size="30" label="Record"></icon-button></footer>`);

/* ---------- dock ---------- */
define('dock-item', `<style>
:host{display:block}
button{all:unset;display:grid;grid-template-rows:1fr 6px;justify-items:center;align-items:center;box-sizing:border-box;width:50px;height:50px;padding:7px 0 0;border-radius:4px}
:host([active]) button{background:#474a47}
.dots{display:flex;gap:2px}
.dots i{width:5px;height:5px;border-radius:50%;background:#e95420}
</style><button type="button"><ui-icon></ui-icon><span class="dots"></span></button>`, (host, root) => {
  const fresh = document.createElement('ui-icon');
  fresh.setAttribute('name', host.getAttribute('icon'));
  fresh.setAttribute('size', host.getAttribute('size') || 32);
  root.querySelector('ui-icon').replaceWith(fresh);
  root.querySelector('.dots').innerHTML = '<i></i>'.repeat(+host.getAttribute('running') || 0);
  root.querySelector('button').setAttribute('aria-label', host.getAttribute('icon'));
});
define('app-dock', `<style>
:host{display:grid;height:54px;background:#131710;overflow:hidden}
svg,.row{grid-area:1/1}
svg{display:block;width:100%;height:54px}
.row{display:flex;align-items:center;gap:8px;padding:0 13px 0 4px;z-index:1}
icon-button{margin-left:auto}
</style>
<svg viewBox="0 0 1920 54" preserveAspectRatio="none" aria-hidden="true">
<rect width="1920" height="54" fill="#141914"/>
<g fill="#182314"><path d="M0 0h60l-30 54H0zM190 0h16l-36 54h-18zM300 54L340 0h10l-30 54zM620 0h20l30 54h-20zM820 54l40-54h20l-30 54zM900 54L960 0h26l-40 54zM1000 0h24l40 54h-30zM1100 54l30-54h14l-20 54z"/></g>
<g fill="#18240f"><path d="M60 54l30-54h6L70 54zM400 0l12 54h8L406 0zM470 54l24-54h12l-20 54zM540 0l30 54h8L548 0zM700 54l30-54h24l-30 54zM1300 0h120q20 20-10 30t-90 24h-40z"/></g>
<g fill="#243412"><path d="M1280 44L1300 0h8l-28 54zM1482 0h26l-78 54h-26zM1338 0l26 54h-6L1336 0zM1388 4l42 40-3 4-40-40z"/></g>
<g fill="#1d2a12"><path d="M770 0h18l-34 54h-22zM252 54l34-54h7l-30 54z"/></g>
<g fill="#29280f"><path d="M302 54L318 0h4l-12 54zM460 54l26-48h4l-22 48zM398 0l8 40h-3zM96 54L120 10l3 1-20 43z"/></g>
<g fill="#1a2a14"><path d="M1530 54q0-34 30-40 30 0 38 14-4 20-30 26zM1654 10q10-12 50-10l-10 20q-26 10-40-10z"/></g>
<path fill="#202d12" d="M1548 0q40 14 50 22 0-8 68-22h-10q-40 34-68 40l-6-18q-4-14-34-22z"/>
<path fill="#203014" d="M1706 30q26-30 60-30 36 0 44 24-20 20-36 22l-8 8q-46-10-60-24zM1668 42q40 0 60 12h-60zM1800 30l22 6q-10 16-30 18h-22z"/>
<path fill="#17270f" d="M1864 20q10-20 40-20h16v54h-24q-36-10-32-34zM1838 54q-10-40 20-54h10q-20 20-8 54z"/>
<path fill="#111" d="M1650 54l-6-28 24-8 30 10-28 16v10zM1824 0h14l-10 54h-8z"/>
<path fill="#181a18" d="M0 0h1920v1H0z"/>
</svg>
<div class="row"><dock-item icon="files" running="2"></dock-item><dock-item icon="chrome" running="1" active></dock-item><dock-item icon="vscode" running="2"></dock-item><dock-item icon="terminal" running="1"></dock-item><dock-item icon="notepad"></dock-item><dock-item icon="idea" size="29"></dock-item><dock-item icon="github"></dock-item><dock-item icon="postman" size="34"></dock-item><dock-item icon="mongo" size="34"></dock-item><dock-item icon="writer" running="1"></dock-item><dock-item icon="disk"></dock-item><icon-button icon="grid" size="24" label="Show applications"></icon-button></div>`);

define('desktop-screen', `<style>
:host{display:flex;flex-direction:column;height:100vh}
main{flex:1;min-height:0;display:flex;box-sizing:border-box;padding:14px 5% 76px;background:#dadcd3}
.app{flex:1;display:flex;min-width:0;background:#ededed;box-shadow:-1px 4px 20px -6px rgba(0,0,0,.75)}
</style>
<system-bar></system-bar><tab-strip></tab-strip><tool-row></tool-row><bookmark-row></bookmark-row>
<main><div class="app"><room-sidebar></room-sidebar><chat-panel></chat-panel></div></main>
<app-dock></app-dock>`);
</script>
</body>
</html>
